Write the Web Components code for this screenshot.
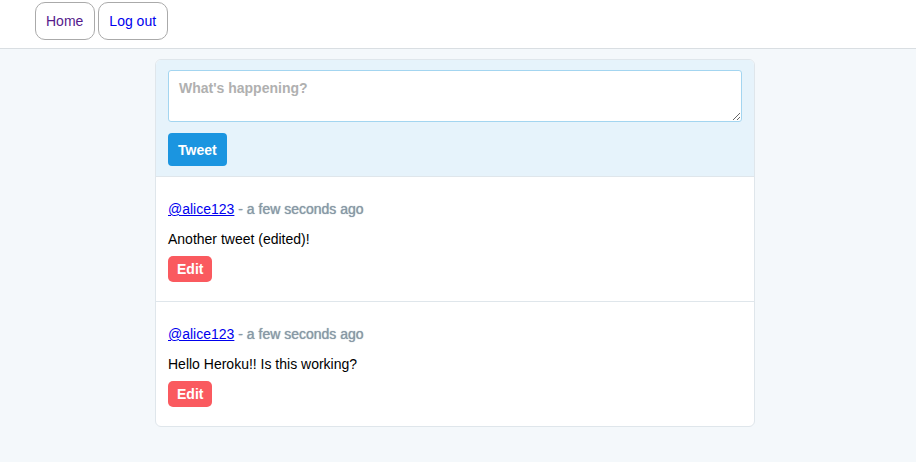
<!DOCTYPE html>
<html lang="en">
<head>
<meta charset="utf-8">
<title>Home</title>
<style>
  body {
    margin: 0;
    min-height: 100vh;
    background: #f4f8fb;
    color: #000;
    font: 14px/16px "Liberation Sans", Arial, Helvetica, sans-serif;
  }
</style>
</head>
<body>
<site-nav>
  <nav-link href="#home" class="visited">Home</nav-link>
  <nav-link href="#logout">Log out</nav-link>
</site-nav>
<tweet-feed>
  <tweet-form slot="form" placeholder="What's happening?"></tweet-form>
  <tweet-item user="@alice123" time="a few seconds ago">Another tweet (edited)!</tweet-item>
  <tweet-item user="@alice123" time="a few seconds ago">Hello Heroku!! Is this working?</tweet-item>
</tweet-feed>
<script>
  class SiteNav extends HTMLElement {
    constructor() {
      super();
      this.attachShadow({ mode: "open" }).innerHTML = `
        <style>
          :host { display: block; background: #fff; border-bottom: 1px solid #d9dee2; }
          nav { display: flex; gap: 3px; padding: 2px 35px 8px; }
        </style>
        <nav><slot></slot></nav>`;
    }
  }

  class NavLink extends HTMLElement {
    constructor() {
      super();
      this.attachShadow({ mode: "open" }).innerHTML = `
        <style>
          :host { display: block; }
          a {
            display: block; padding: 10px 11px 10px 10px; line-height: 16px;
            border: 1px solid #aaa; border-radius: 10px;
            color: #0000ee; text-decoration: none;
          }
          :host(.visited) a { color: #551a8b; }
        </style>
        <a><slot></slot></a>`;
    }
    connectedCallback() {
      this.shadowRoot.querySelector("a").setAttribute("href", this.getAttribute("href"));
    }
  }

  class TweetFeed extends HTMLElement {
    constructor() {
      super();
      this.attachShadow({ mode: "open" }).innerHTML = `
        <style>
          :host { display: block; padding: 10px 6px 35px 0; }
          main {
            box-sizing: border-box; max-width: 600px; margin: 0 auto;
            background: #fff; border: 1px solid #dfe6eb; border-radius: 6px;
            overflow: hidden;
          }
        </style>
        <main><slot name="form"></slot><slot></slot></main>`;
    }
  }

  class TweetForm extends HTMLElement {
    constructor() {
      super();
      this.attachShadow({ mode: "open" }).innerHTML = `
        <style>
          :host { display: block; padding: 10px 12px; background: #e6f3fb; }
          form { display: flex; flex-direction: column; align-items: flex-start; gap: 11px; }
          textarea {
            box-sizing: border-box; width: 100%; height: 52px; margin: 0;
            padding: 9px 10px; border: 1px solid #a3d5f0; border-radius: 3px;
            background: #fff; color: #000; font: inherit; font-weight: 700;
            outline: none; resize: vertical;
          }
          textarea::placeholder { color: #b0b0b0; opacity: 1; }
          button {
            margin: 0; padding: 9px 10px 8px; border: 0; border-radius: 4px;
            background: #1b95e0; color: #fff; font: inherit; font-weight: 700;
          }
        </style>
        <form>
          <textarea name="tweet" rows="2"></textarea>
          <button type="button">Tweet</button>
        </form>`;
    }
    connectedCallback() {
      const box = this.shadowRoot.querySelector("textarea");
      const hint = this.getAttribute("placeholder");
      box.placeholder = hint;
      box.setAttribute("aria-label", hint);
    }
  }

  class TweetItem extends HTMLElement {
    constructor() {
      super();
      this.attachShadow({ mode: "open" }).innerHTML = `
        <style>
          :host { display: block; padding: 24px 12px 19px; border-top: 1px solid #dfe6eb; }
          p { margin: 0 0 14px; }
          .text { margin-bottom: 9px; }
          .meta { color: #8899a6; }
          .when { text-shadow: 0 0 1px #8899a6; }
          a { color: #0000ee; }
          button {
            display: block; margin: 0; padding: 5px 9px; border: 0; border-radius: 5px;
            background: #fa5a5f; color: #fff; font: inherit; font-weight: 700; line-height: 16px;
          }
        </style>
        <article>
          <p class="meta"><a href="#user"></a><span class="when"> - <time></time></span></p>
          <p class="text"><slot></slot></p>
          <button type="button">Edit</button>
        </article>`;
    }
    connectedCallback() {
      this.shadowRoot.querySelector("a").textContent = this.getAttribute("user");
      this.shadowRoot.querySelector("time").textContent = this.getAttribute("time");
    }
  }

  customElements.define("site-nav", SiteNav);
  customElements.define("nav-link", NavLink);
  customElements.define("tweet-feed", TweetFeed);
  customElements.define("tweet-form", TweetForm);
  customElements.define("tweet-item", TweetItem);
</script>
</body>
</html>
